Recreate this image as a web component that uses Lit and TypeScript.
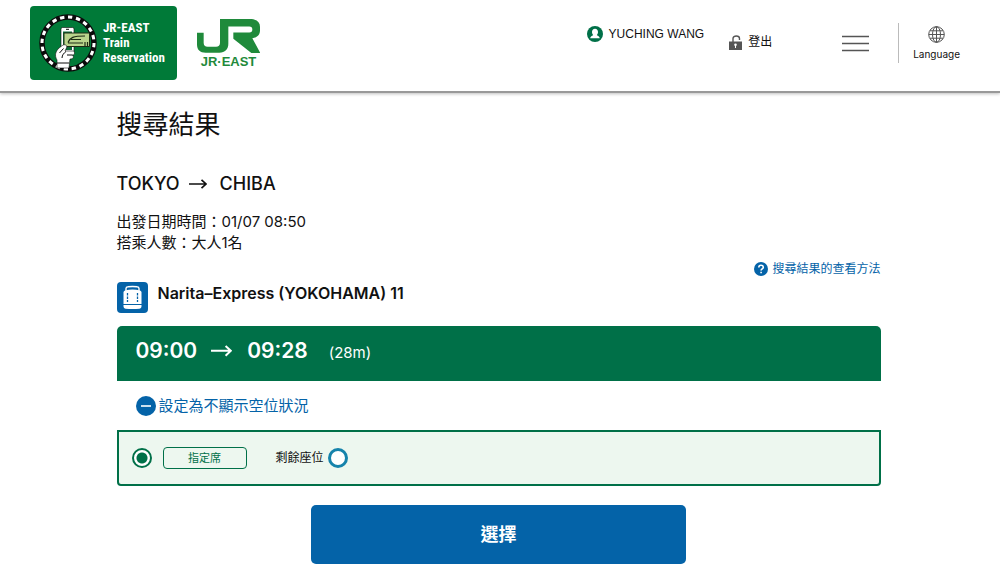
import { LitElement, html, css, svg } from "lit";
import { customElement, property, state } from "lit/decorators.js";

const trackRing = svg`
  <circle cx="29" cy="29" r="26" fill="none" stroke="#0b0b0b" stroke-width="5.500"></circle>
  <circle cx="29" cy="29" r="26" fill="none" stroke="#fff" stroke-width="3" pathLength="100" stroke-dasharray="2.7 2.3"></circle>
`;

@customElement("site-header")
export class SiteHeader extends LitElement {
  @property() user = "";

  static styles = css`
    :host {
      display: block;
    }
    .bar {
      display: flex;
      box-sizing: border-box;
      height: 93px;
      padding: 6px 36px 0 30px;
      border-bottom: 2px solid #999;
      box-shadow: 0 1px 3px rgba(0, 0, 0, 0.25);
      background: #fff;
    }
    a {
      color: #111;
      text-decoration: none;
    }
    svg {
      display: block;
      flex: none;
    }
    .brand {
      display: flex;
      align-items: center;
      box-sizing: border-box;
      width: 147px;
      height: 74px;
      padding-left: 9px;
      gap: 6px;
      border-radius: 4px;
      background: #007a38;
      color: #fff;
      font: bold 13px/15px "Roboto Condensed", "Liberation Sans Narrow", "Liberation Sans", sans-serif;
    }
    .name {
      padding-bottom: 1px;
    }
    .company {
      display: flex;
      flex-direction: column;
      align-items: center;
      margin-left: 20px;
      padding-top: 13px;
      color: #1f8a3b;
      font: bold 13px/15px "Liberation Sans", sans-serif;
    }
    .company svg {
      margin-bottom: 1px;
    }
    .tools {
      display: flex;
      margin-left: auto;
    }
    .tool {
      display: flex;
      align-items: center;
      height: 20px;
      font-size: 12px;
      line-height: 20px;
      white-space: nowrap;
    }
    .user {
      gap: 6px;
      margin-top: 18px;
      font-family: "Liberation Sans", sans-serif;
    }
    .logout {
      gap: 6px;
      margin: 26px 0 0 25px;
    }
    .menu {
      width: 27px;
      height: 17px;
      margin: 29px 0 0 70px;
      padding: 0;
      border: 0;
      background: none;
      cursor: pointer;
    }
    .language {
      display: flex;
      flex-direction: column;
      align-items: center;
      gap: 5px;
      box-sizing: border-box;
      height: 40px;
      margin: 17px 0 0 29px;
      padding: 3px 4px 0 14px;
      border: 0;
      border-left: 1px solid #bbb;
      background: none;
      color: #111;
      font: 10px/12px Inter, sans-serif;
      cursor: pointer;
    }
  `;

  render() {
    return html`
      <header class="bar">
        <a class="brand" href="#">
          <svg width="58" height="58" viewBox="0 0 58 58" aria-hidden="true">
            ${trackRing}
            <path d="M22 40V15q0-1.500 1.500-1.500h10q1.500 0 1.500 1.500V40z" fill="#fff" stroke="#0b0b0b" stroke-width=".6"></path>
            <path d="M24 17.500h9V36h-9z" fill="#0a6b39"></path>
            <path d="M27 15.300h3" stroke="#0b0b0b"></path>
            <path d="M25 19h25.500v13.500H25z" fill="#b9d48c" stroke="#1c2a14"></path>
            <path d="M29 28.500c2-5 5-6.500 17-6.500M29 29h15M32 25.500h10M46 28v4M48.500 28v4" fill="none" stroke="#1c2a14" stroke-width="1.200"></path>
            <path d="M18 54V46c-3-5-1-9 2-12l4-3c3-1 5 1 3 4l-1 2h8c2 0 2 4 0 4h-1c2 0 2 4-1 4h-1l-1 9z" fill="#fff" stroke="#0b0b0b" stroke-width=".6"></path>
            <path d="M20.500 39l4-4.500M23 44c0-3 2-5 4-6.500M28 41h5" fill="none" stroke="#0b0b0b"></path>
            <path d="M18 49h12" stroke="#0b0b0b"></path>
          </svg>
          <span class="name">JR-EAST<br />Train<br />Reservation</span>
        </a>
        <a class="company" href="#">
          <svg width="63" height="34" viewBox="36 58 189 103" preserveAspectRatio="none" aria-hidden="true">
            <path
              d="M105 58h90c20 0 30 9 30 24v10c0 14-8 22-23 24l24 45h-27l-54-43V99h48c6 0 9-3 9-9s-3-9-9-9h-63v52c0 17-10 27-27 27H62c-17 0-26-9-26-25V100h20v30c0 8 4 12 12 12h25c8 0 12-4 12-12z"
              fill="#1f8a3b"
            ></path>
          </svg>
          JR·EAST
        </a>
        <div class="tools">
          <a class="tool user" href="#">
            <svg width="16" height="16" viewBox="0 0 16 16" aria-hidden="true">
              <circle cx="8" cy="8" r="8" fill="#007048"></circle>
              <path d="M8 2.800c1.900 0 3 1.300 3 3.200 0 1.400-.6 2.300-1.200 3 .3.900 2.900 1 2.900 3.200H3.300c0-2.200 2.600-2.300 2.900-3.200C5.600 8.300 5 7.400 5 6c0-1.900 1.100-3.200 3-3.200z" fill="#fff"></path>
            </svg>
            ${this.user}
          </a>
          <a class="tool logout" href="#">
            <svg width="13" height="15" viewBox="0 0 13 15" aria-hidden="true">
              <path d="M4 7V3.600C4 .2 10.500.2 10.500 3.600V5" fill="none" stroke="#555" stroke-width="1.400"></path>
              <path d="M0 6.500h13V15H0z" fill="#555"></path>
              <circle cx="6.500" cy="9.700" r="1.300" fill="#fff"></circle>
              <path d="M6.500 10v3" stroke="#fff"></path>
            </svg>
            登出
          </a>
          <button class="menu" type="button" aria-label="Menu">
            <svg width="27" height="17" viewBox="0 0 27 17" aria-hidden="true">
              <path d="M0 1.500h27M0 8.500h27M0 15.500h27" stroke="#555" stroke-width="1.500"></path>
            </svg>
          </button>
          <button class="language" type="button">
            <svg width="17" height="17" viewBox="0 0 17 17" fill="none" stroke="#555" aria-hidden="true">
              <circle cx="8.500" cy="8.500" r="7.800"></circle>
              <ellipse cx="8.500" cy="8.500" rx="4" ry="7.800"></ellipse>
              <path d="M8.500.7v15.600M.7 8.500h15.600M2 4.800h13M2 12.200h13"></path>
            </svg>
            Language
          </button>
        </div>
      </header>
    `;
  }
}

@customElement("right-arrow")
export class RightArrow extends LitElement {
  static styles = css`
    :host {
      display: block;
      width: 1em;
    }
    svg {
      display: block;
      width: 100%;
    }
  `;

  render() {
    return html`
      <svg viewBox="0 0 18 10" fill="none" stroke="currentColor" stroke-width="1.700" aria-hidden="true">
        <path d="M0 5h17M12.500.8L17 5l-4.500 4.200"></path>
      </svg>
    `;
  }
}

@customElement("app-root")
export class AppRoot extends LitElement {
  @state() private seatsShown = true;

  static styles = css`
    :host {
      display: block;
      color: #111;
      background: #fff;
      font-family: Inter, "Noto Sans CJK TC", sans-serif;
    }
    main {
      max-width: 764px;
      margin: 0 auto;
      padding: 14px 3px 18px 0;
    }
    a {
      text-decoration: none;
    }
    svg {
      display: block;
      flex: none;
    }
    h1 {
      margin: 0;
      font-size: 26px;
      line-height: 36px;
      font-weight: 400;
    }
    .route {
      display: flex;
      align-items: center;
      margin: 28px 0 0;
      font-size: 18px;
      line-height: 26px;
      font-weight: 500;
    }
    .route right-arrow {
      margin: 0 13px 0 9px;
    }
    .details {
      margin: 14px 0 0;
      font-size: 15px;
      line-height: 21px;
    }
    .help {
      display: flex;
      justify-content: flex-end;
      margin-top: 6px;
      color: #0463a8;
      font-size: 12px;
      line-height: 20px;
    }
    .help a {
      display: flex;
      align-items: center;
      gap: 4px;
      color: inherit;
    }
    .train {
      display: flex;
      gap: 10px;
      margin-top: 3px;
    }
    .train h2 {
      margin: 0;
      font-size: 16px;
      line-height: 23px;
      font-weight: 600;
    }
    .times {
      display: flex;
      align-items: center;
      margin-top: 13px;
      padding: 10px 19px 15px;
      border-radius: 5px 5px 0 0;
      background: #007048;
      color: #fff;
      font-size: 21px;
      line-height: 30px;
      font-weight: 600;
    }
    .times right-arrow {
      margin: 0 15px 0 14px;
    }
    .duration {
      margin: 4px 0 0 21px;
      font-size: 15px;
      line-height: 26px;
      font-weight: 400;
    }
    .toggle {
      display: flex;
      align-items: center;
      gap: 3px;
      margin: 14px 0 13px 19px;
      padding: 0;
      border: 0;
      background: none;
      color: #0463a8;
      font: 15px/22px Inter, "Noto Sans CJK TC", sans-serif;
      cursor: pointer;
    }
    .seat {
      display: flex;
      align-items: center;
      box-sizing: border-box;
      height: 56px;
      padding: 0 13px;
      border: 2px solid #007048;
      border-radius: 0 0 4px 4px;
      background: #edf7ef;
      font-size: 12px;
      line-height: 20px;
    }
    .seat input {
      appearance: none;
      width: 20px;
      height: 20px;
      margin: 0;
      border: 2px solid #007048;
      border-radius: 50%;
      background: radial-gradient(circle, #007048 5px, #fff 6px);
    }
    .seat label {
      display: flex;
      align-items: center;
      gap: 11px;
    }
    .kind {
      box-sizing: border-box;
      width: 84px;
      border: 1px solid #007048;
      border-radius: 4px;
      color: #007048;
      font-size: 11px;
      text-align: center;
    }
    .left {
      display: flex;
      align-items: center;
      gap: 4px;
      margin-left: 29px;
    }
    .choose {
      display: block;
      width: 49%;
      margin: 19px auto 0;
      padding: 16px;
      border: 0;
      border-radius: 5px;
      background: #0463a8;
      color: #fff;
      font: bold 18px/27px Inter, "Noto Sans CJK TC", sans-serif;
      cursor: pointer;
    }
  `;

  private toggleSeats() {
    this.seatsShown = !this.seatsShown;
  }

  render() {
    return html`
      <site-header user="YUCHING WANG"></site-header>
      <main>
        <h1>搜尋結果</h1>
        <p class="route">TOKYO<right-arrow></right-arrow>CHIBA</p>
        <p class="details">出發日期時間：01/07 08:50<br />搭乘人數：大人1名</p>
        <div class="help">
          <a href="#">
            <svg width="14" height="14" viewBox="0 0 14 14" fill="none" aria-hidden="true">
              <circle cx="7" cy="7" r="7" fill="#0463a8"></circle>
              <path d="M4.800 5.400c0-3 4.500-2.800 4.500-.2 0 1.600-2.200 1.700-2.200 3.300M7.100 9.700v1.600" stroke="#fff" stroke-width="1.600"></path>
            </svg>
            搜尋結果的查看方法
          </a>
        </div>
        <div class="train">
          <svg width="31" height="31" viewBox="0 0 31 31" fill="none" aria-hidden="true">
            <rect width="31" height="31" rx="4" fill="#0463a8"></rect>
            <path d="M9 9V6.500Q9 5 11 4.800q4.500-.6 9 0Q22 5 22 6.500V9" stroke="#fff" stroke-width="1.400"></path>
            <path d="M8 8.500q7.500-2 15 0 1.500.5 1.500 2V22h-18V10.500q0-1.500 1.500-2z" fill="#fff"></path>
            <path d="M6.500 23h18v1.500q0 2-2 2.200-7 .8-14 0-2-.2-2-2.200z" fill="#fff"></path>
            <path d="M10.500 11v9M20.500 11v9" stroke="#0463a8" stroke-width="1.300" stroke-dasharray="2.500 1"></path>
          </svg>
          <h2>Narita–Express (YOKOHAMA) 11</h2>
        </div>
        <div class="times">
          <time>09:00</time><right-arrow></right-arrow><time>09:28</time>
          <span class="duration">(28m)</span>
        </div>
        <button class="toggle" type="button" aria-expanded=${this.seatsShown} @click=${this.toggleSeats}>
          <svg width="20" height="20" viewBox="0 0 20 20" aria-hidden="true">
            <circle cx="10" cy="10" r="10" fill="#0463a8"></circle>
            <path d="M5 10h10" stroke="#fff" stroke-width="1.600"></path>
          </svg>
          設定為不顯示空位狀況
        </button>
        ${this.seatsShown
          ? html`<div class="seat">
              <label><input type="radio" name="seat" checked /><span class="kind">指定席</span></label>
              <span class="left">
                剩餘座位
                <svg width="20" height="20" viewBox="0 0 20 20" fill="#fff" aria-hidden="true">
                  <circle cx="10" cy="10" r="8.500" stroke="#1683ab" stroke-width="3"></circle>
                </svg>
              </span>
            </div>`
          : ""}
        <button class="choose" type="button">選擇</button>
      </main>
    `;
  }
}
